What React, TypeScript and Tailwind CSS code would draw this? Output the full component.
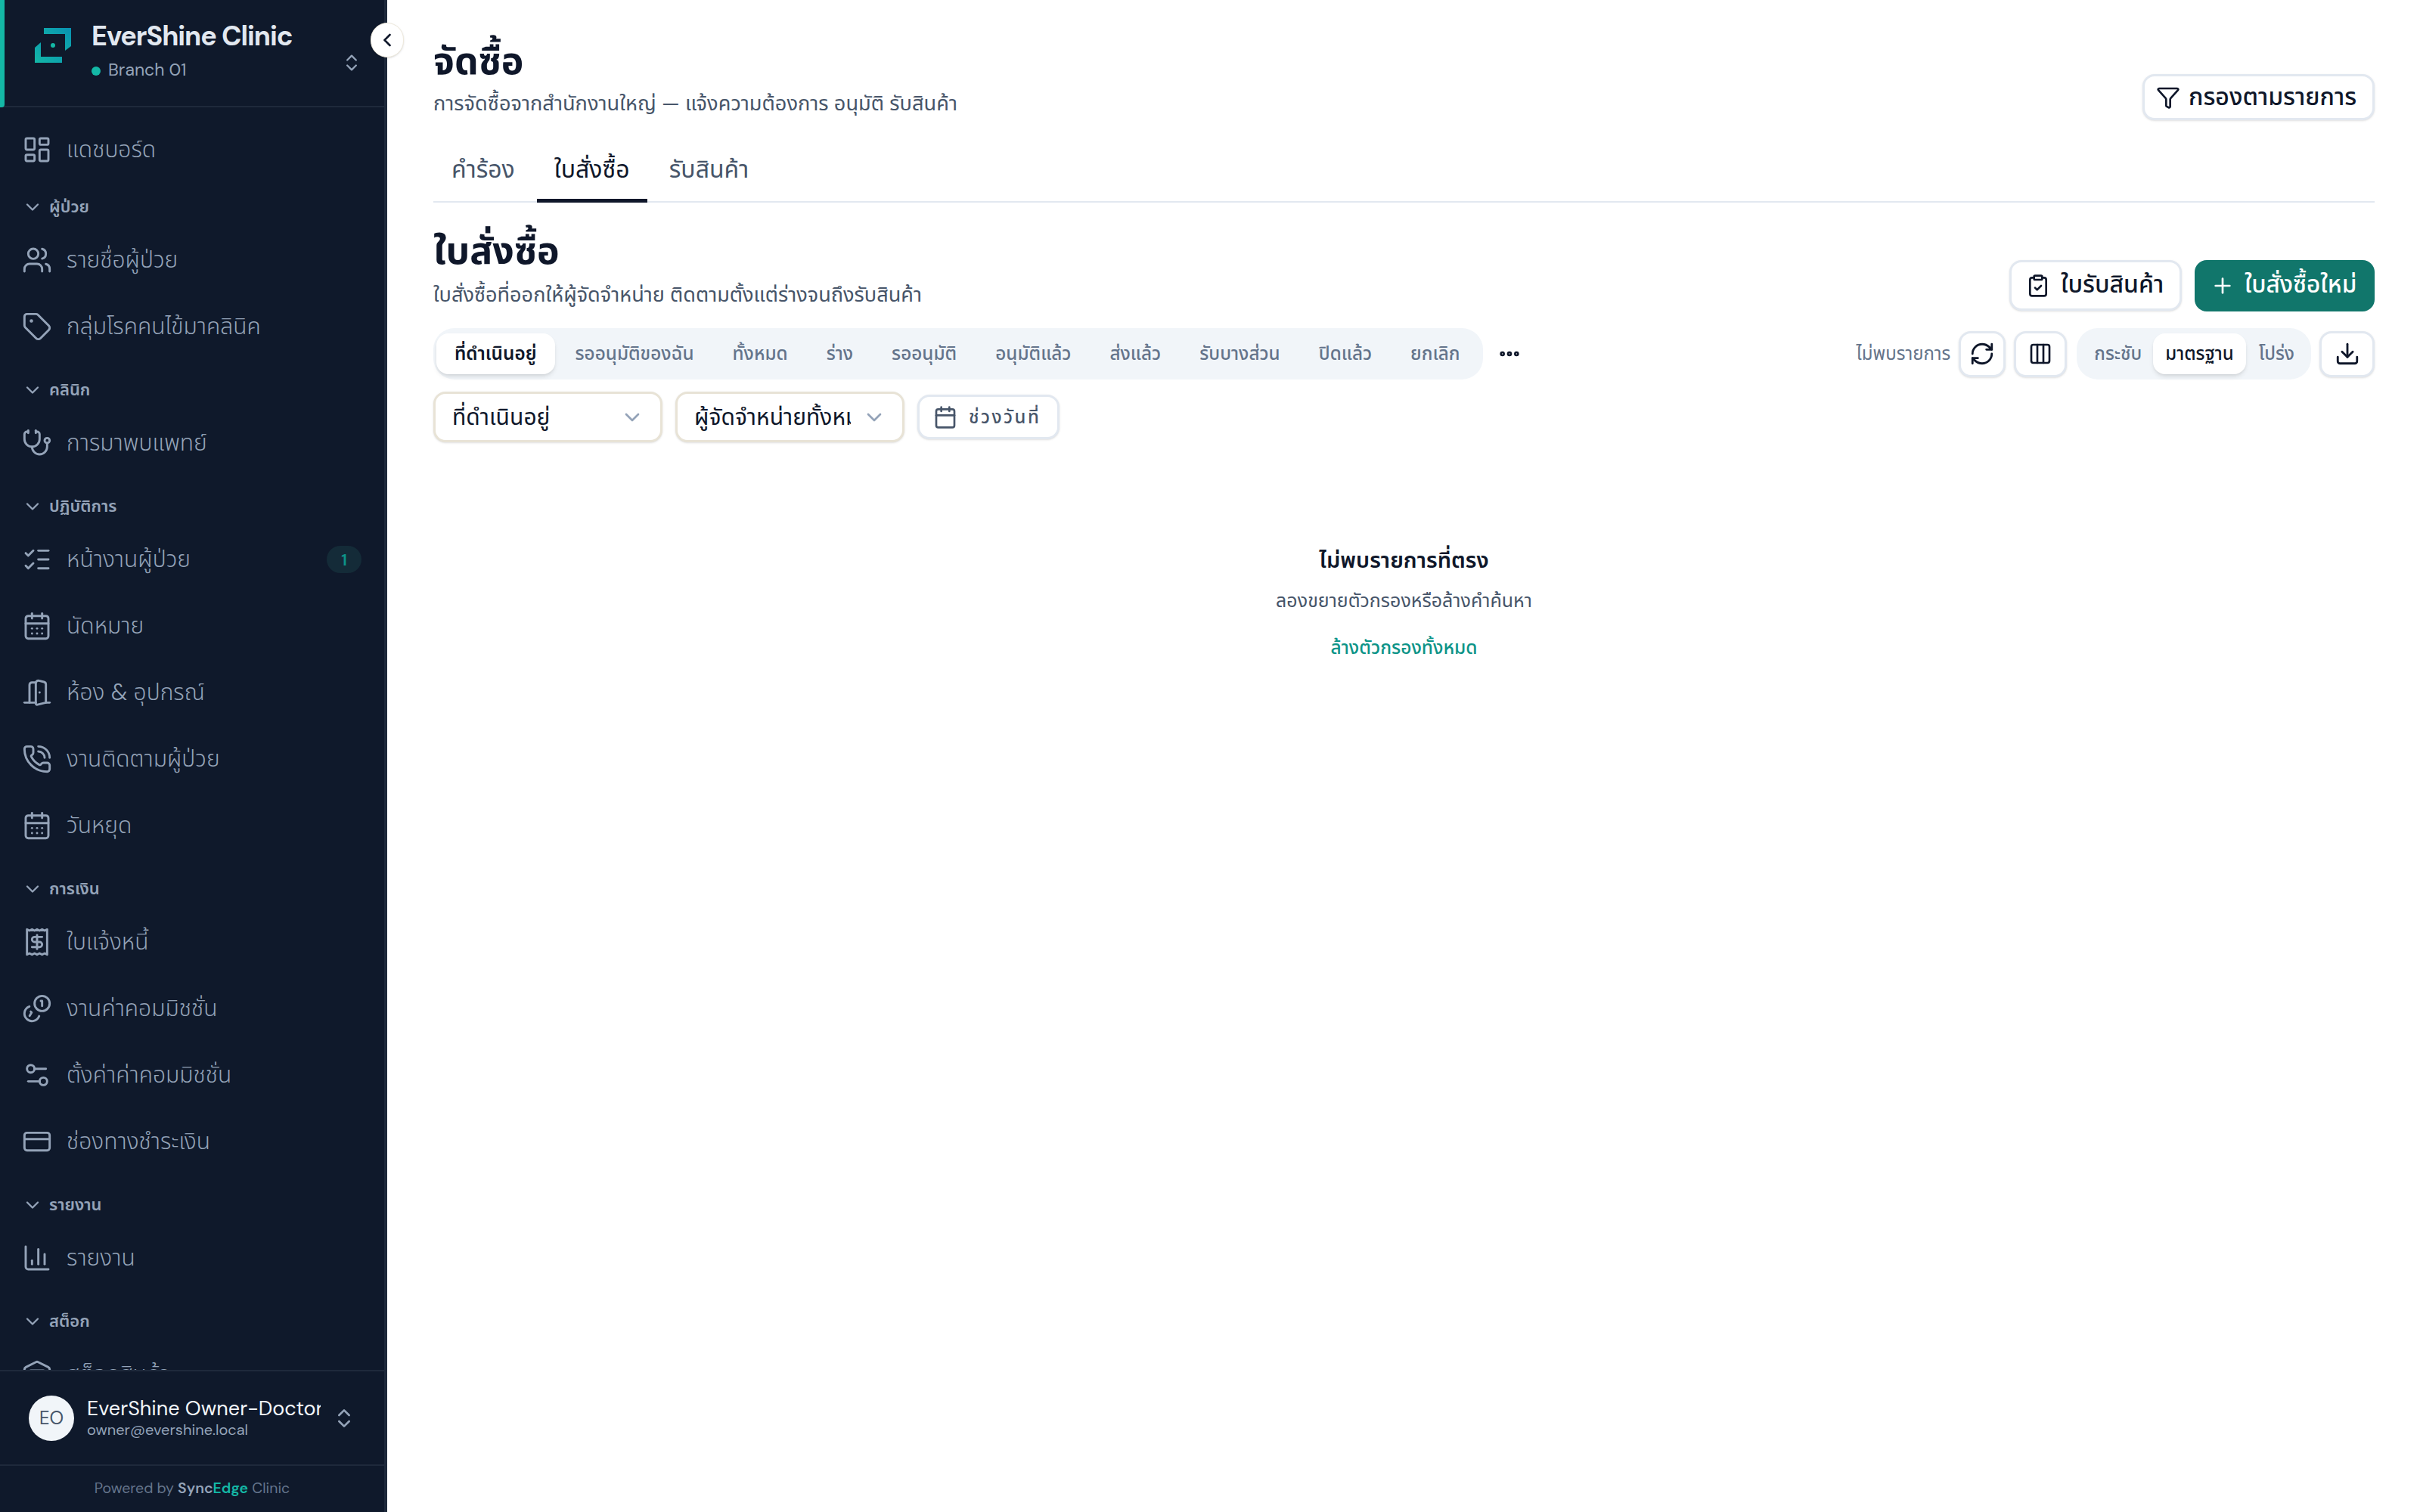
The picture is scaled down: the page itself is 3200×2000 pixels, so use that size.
import React from "react";
import {
  LayoutDashboard, Users, Tag, Stethoscope, ListChecks, CalendarDays, DoorOpen, PhoneCall, Receipt,
  Settings2, CreditCard, ChartColumn, Warehouse, ChevronDown, ChevronLeft, ChevronsUpDown, Funnel,
  ClipboardCheck, Plus, Ellipsis, RefreshCw, Columns3, Download, Calendar,
} from "lucide-react";

const CoinsFlipped = ({ className }: { className?: string }) => (
  <svg viewBox="0 0 24 24" fill="none" stroke="currentColor" strokeWidth={1.75} strokeLinecap="round" strokeLinejoin="round" className={className}>
    <circle cx="16" cy="8" r="6" />
    <path d="M5.91 10.37A6 6 0 1 0 13.66 18" />
    <path d="M15 6h1v4" />
    <path d="m7 14.5.7.7-1.6 2.6" />
  </svg>
);

const Logo = () => (
  <svg viewBox="0 0 48 46" className="w-[48px] h-[46px] shrink-0">
    <defs>
      <linearGradient id="lg" x1="0" y1="1" x2="1" y2="0">
        <stop offset="0" stopColor="#14b8a6" />
        <stop offset="1" stopColor="#0891b2" />
      </linearGradient>
    </defs>
    <path d="M12 0H48V24L40 30V8H12Z" fill="url(#lg)" />
    <path d="M0 26L8 19V38H36V46H0Z" fill="url(#lg)" />
    <circle cx="24" cy="23" r="3" fill="#14b8a6" />
  </svg>
);

type Item = { kind: "item"; label: string; icon: React.ComponentType<{ className?: string; strokeWidth?: number }>; badge?: string };
type Group = { kind: "group"; label: string; first?: boolean };

const nav: (Item | Group)[] = [
  { kind: "item", label: "แดชบอร์ด", icon: LayoutDashboard },
  { kind: "group", label: "ผู้ป่วย", first: true },
  { kind: "item", label: "รายชื่อผู้ป่วย", icon: Users },
  { kind: "item", label: "กลุ่มโรคคนไข้มาคลินิค", icon: Tag },
  { kind: "group", label: "คลินิก" },
  { kind: "item", label: "การมาพบแพทย์", icon: Stethoscope },
  { kind: "group", label: "ปฏิบัติการ" },
  { kind: "item", label: "หน้างานผู้ป่วย", icon: ListChecks, badge: "1" },
  { kind: "item", label: "นัดหมาย", icon: CalendarDays },
  { kind: "item", label: "ห้อง & อุปกรณ์", icon: DoorOpen },
  { kind: "item", label: "งานติดตามผู้ป่วย", icon: PhoneCall },
  { kind: "item", label: "วันหยุด", icon: CalendarDays },
  { kind: "group", label: "การเงิน" },
  { kind: "item", label: "ใบแจ้งหนี้", icon: Receipt },
  { kind: "item", label: "งานค่าคอมมิชชั่น", icon: CoinsFlipped },
  { kind: "item", label: "ตั้งค่าค่าคอมมิชชั่น", icon: Settings2 },
  { kind: "item", label: "ช่องทางชำระเงิน", icon: CreditCard },
  { kind: "group", label: "รายงาน" },
  { kind: "item", label: "รายงาน", icon: ChartColumn },
  { kind: "group", label: "สต็อก" },
  { kind: "item", label: "สต็อกสินค้า", icon: Warehouse },
];

const statusTabs = ["ที่ดำเนินอยู่", "รออนุมัติของฉัน", "ทั้งหมด", "ร่าง", "รออนุมัติ", "อนุมัติแล้ว", "ส่งแล้ว", "รับบางส่วน", "ปิดแล้ว", "ยกเลิก"];

const IconBtn = ({ children, w }: { children: React.ReactNode; w: string }) => (
  <button className={`${w} h-[61px] flex items-center justify-center rounded-[16px] border-[3px] border-[#e2e8f0] bg-white shadow-sm text-[#0f172a]`}>
    {children}
  </button>
);

const Select = ({ label, w }: { label: string; w: string }) => (
  <div className="w-[303px] h-[67px] flex items-center pl-[22px] pr-[21px] rounded-[16px] border-[3px] border-[#e8e3d6] bg-white shadow-sm">
    <span className={`${w} overflow-hidden whitespace-nowrap text-[30px] leading-[44px] text-[#0f172a]`}>{label}</span>
    <ChevronDown className="ml-auto w-[32px] h-[32px] text-[#94a3b8]" strokeWidth={2} />
  </div>
);

export default function App() {
  return (
    <div className="flex h-screen overflow-hidden bg-white font-['DM_Sans','Noto_Sans_Thai',Inter,'Noto_Sans',sans-serif]">
      <aside className="relative w-[512px] shrink-0 h-full flex flex-col bg-[#0f192b] border-r-[4px] border-[#1e293b]">
        <div className="relative h-[142px] shrink-0 flex items-start border-b-2 border-[#1e293b] pl-[46px]">
          <div className="absolute left-0 top-0 bottom-[-2px] w-[6px] bg-[#14b8a6] rounded-br-[4px]" />
          <div className="mt-[37px]"><Logo /></div>
          <div className="ml-[27px] mt-[24px]">
            <div className="text-[36px] leading-[48px] font-bold text-[#e2e8f0] whitespace-nowrap tracking-[-1.1px]">EverShine Clinic</div>
            <div className="flex items-center gap-[10px] mt-[4px]">
              <span className="w-[12px] h-[12px] rounded-full bg-[#14b8a6] mt-[3px]" />
              <span className="text-[23px] leading-[32px] text-[#94a3b8]">Branch 01</span>
            </div>
          </div>
          <ChevronsUpDown className="absolute left-[451px] top-[69px] w-[28px] h-[28px] text-[#94a3b8]" strokeWidth={2} />
        </div>
        <button className="absolute left-[490px] top-[30px] z-10 w-[44px] h-[46px] rounded-full bg-white border border-[#eee9dc] shadow-sm flex items-center justify-center text-[#0f172a]">
          <ChevronLeft className="w-[28px] h-[28px]" strokeWidth={2.25} />
        </button>
        <nav className="flex-1 min-h-0 overflow-hidden pt-[16px] pl-[29px] pr-[30px] flex flex-col">
          {nav.map((n) =>
            n.kind === "group" ? (
              <div key={n.label + "g"} className={`shrink-0 h-[60px] flex items-center gap-[8px] text-[#94a3b8] ${n.first ? "-mt-[2px]" : "mt-[6px]"}`}>
                <ChevronDown className="w-[28px] h-[28px]" strokeWidth={2} />
                <span className="text-[22px] leading-[32px] font-semibold whitespace-nowrap">{n.label}</span>
              </div>
            ) : (
              <div key={n.label} className="shrink-0 h-[80px] mb-[8px] flex items-center gap-[19px] text-[#94a3b8]">
                <n.icon className="w-[40px] h-[40px] shrink-0" strokeWidth={1.75} />
                <span className="text-[30px] leading-[44px] font-light whitespace-nowrap">{n.label}</span>
                {n.badge && (
                  <span className="ml-auto w-[46px] h-[36px] rounded-full bg-[#142b38] text-[#0d9488] text-[22px] font-semibold flex items-center justify-center">{n.badge}</span>
                )}
              </div>
            )
          )}
        </nav>
        <div className="shrink-0 h-[125px] flex items-center border-t-2 border-[#1e293b] pl-[38px] z-10 bg-[#0f192b]">
          <div className="w-[60px] h-[60px] rounded-full bg-[#f1f5f9] text-[#475569] text-[24px] flex items-center justify-center shrink-0">EO</div>
          <div className="ml-[17px] w-[309px] overflow-hidden pb-[3px]">
            <div className="text-[27px] leading-[34px] text-[#f1f5f9] whitespace-nowrap">EverShine Owner-Doctor</div>
            <div className="text-[20px] leading-[23px] text-[#94a3b8] whitespace-nowrap">owner@evershine.local</div>
          </div>
          <ChevronsUpDown className="ml-[15px] w-[32px] h-[32px] text-[#94a3b8]" strokeWidth={2} />
        </div>
        <div className="shrink-0 h-[63px] pb-[2px] border-t-2 border-[#1e293b] flex items-center justify-center text-[19.5px] text-[#64748b] whitespace-nowrap z-10 bg-[#0f192b]">
          <span>Powered by&nbsp;</span>
          <span className="font-semibold text-[#94a3b8]">Sync</span>
          <span className="font-semibold text-[#14b8a6]">Edge</span>
          <span>&nbsp;Clinic</span>
        </div>
      </aside>

      <main className="flex-1 min-w-0 pl-[61px] pr-[60px] flex flex-col">
        <div className="h-[170px] shrink-0 flex justify-between items-start">
          <div className="pt-[50px]">
            <h1 className="text-[50px] leading-[62px] font-bold text-[#0f172a]">จัดซื้อ</h1>
            <p className="text-[27.2px] leading-[40px] text-[#475569] mt-[5px] whitespace-nowrap">การจัดซื้อจากสำนักงานใหญ่ — แจ้งความต้องการ อนุมัติ รับสินค้า</p>
          </div>
          <button className="mt-[98px] w-[307px] h-[61px] flex items-center gap-[11px] pl-[15px] pb-[2px] rounded-[16px] border-[3px] border-[#e2e8f0] bg-white shadow-sm text-[#0f172a]">
            <Funnel className="w-[32px] h-[32px] mt-[2px]" />
            <span className="text-[32px] font-medium whitespace-nowrap">กรองตามรายการ</span>
          </button>
        </div>
        <div className="h-[98px] shrink-0 flex items-end gap-[6px] pl-[1px] border-b-2 border-[#e2e8f0]">
          {["คำร้อง", "ใบสั่งซื้อ", "รับสินค้า"].map((t, i) => (
            <div key={t} className={`h-[70px] -mb-[2px] pb-[14px] px-[23px] flex items-center text-[32px] whitespace-nowrap ${i === 1 ? "border-b-[5px] border-[#0f172a] text-[#0f172a]" : "text-[#475569] border-b-[5px] border-transparent"}`}>{t}</div>
          ))}
        </div>
        <div className="h-[166px] shrink-0 flex justify-between items-start">
          <div className="pt-[30px]">
            <h2 className="text-[50px] leading-[68px] font-bold text-[#0f172a]">ใบสั่งซื้อ</h2>
            <p className="text-[27.1px] leading-[40px] text-[#475569] mt-[4px] whitespace-nowrap">ใบสั่งซื้อที่ออกให้ผู้จัดจำหน่าย ติดตามตั้งแต่ร่างจนถึงรับสินค้า</p>
          </div>
          <div className="mt-[76px] flex gap-[17px]">
            <button className="w-[228px] h-[67px] flex items-center gap-[14px] pl-[19px] pb-[3px] rounded-[16px] border-[3px] border-[#e2e8f0] bg-white shadow-sm text-[#0f172a]">
              <ClipboardCheck className="w-[32px] h-[32px] mt-[3px]" />
              <span className="text-[32px] font-medium whitespace-nowrap">ใบรับสินค้า</span>
            </button>
            <button className="w-[238px] h-[68px] flex items-center gap-[13px] pl-[21px] pb-[3px] rounded-[16px] bg-[#11766b] text-white">
              <Plus className="w-[32px] h-[32px] mt-[3px]" />
              <span className="text-[31.5px] font-medium whitespace-nowrap">ใบสั่งซื้อใหม่</span>
            </button>
          </div>
        </div>
        <div className="shrink-0 flex items-center justify-between">
          <div className="flex items-center">
            <div className="h-[68px] rounded-[28px] bg-[#f1f5f9] flex items-center pl-[4px] pr-[6px] gap-[3px]">
              {statusTabs.map((t, i) => (
                <div key={t} className={`h-[54px] px-[24px] flex items-center text-[24.3px] whitespace-nowrap rounded-[16px] ${i === 0 ? "bg-white shadow-md font-semibold text-[#0f172a]" : "font-medium text-[#64748b]"}`}>{t}</div>
              ))}
            </div>
            <Ellipsis className="ml-[19px] w-[32px] h-[32px] text-[#0f172a]" strokeWidth={3} />
          </div>
          <div className="flex items-center">
            <span className="text-[24px] text-[#64748b] whitespace-nowrap">ไม่พบรายการ</span>
            <div className="ml-[11px]"><IconBtn w="w-[62px]"><RefreshCw className="w-[34px] h-[34px]" /></IconBtn></div>
            <div className="ml-[11px]"><IconBtn w="w-[70px]"><Columns3 className="w-[32px] h-[32px]" /></IconBtn></div>
            <div className="ml-[13px] h-[68px] rounded-[28px] bg-[#f1f5f9] flex items-center px-[8px]">
              <span className="pl-[15px] pr-[15px] text-[24px] font-medium text-[#64748b] whitespace-nowrap">กระชับ</span>
              <span className="h-[54px] px-[16px] flex items-center rounded-[16px] bg-white shadow-md text-[24px] font-medium text-[#0f172a] whitespace-nowrap">มาตรฐาน</span>
              <span className="pl-[17px] pr-[14px] text-[24px] font-medium text-[#64748b] whitespace-nowrap">โปร่ง</span>
            </div>
            <div className="ml-[11px]"><IconBtn w="w-[73px]"><Download className="w-[34px] h-[34px]" /></IconBtn></div>
          </div>
        </div>
        <div className="shrink-0 mt-[16px] flex items-center gap-[17px]">
          <Select label="ที่ดำเนินอยู่" w="w-[200px]" />
          <Select label="ผู้จัดจำหน่ายทั้งหมด" w="w-[207px]" />
          <button className="w-[188px] h-[59px] flex items-center gap-[15px] pl-[18px] rounded-[16px] border-[3px] border-[#e2e8f0] bg-white shadow-sm text-[#475569]">
            <Calendar className="w-[32px] h-[32px]" />
            <span className="text-[24px] font-medium tracking-[2.5px] whitespace-nowrap">ช่วงวันที่</span>
          </button>
        </div>
        <div className="flex flex-col items-center mt-[134px]">
          <div className="text-[29px] leading-[44px] font-semibold text-[#0f172a]">ไม่พบรายการที่ตรง</div>
          <div className="text-[25px] leading-[36px] text-[#475569] mt-[14px]">ลองขยายตัวกรองหรือล้างคำค้นหา</div>
          <div className="text-[24.5px] leading-[36px] font-medium text-[#0d9488] mt-[26px]">ล้างตัวกรองทั้งหมด</div>
        </div>
      </main>
    </div>
  );
}
